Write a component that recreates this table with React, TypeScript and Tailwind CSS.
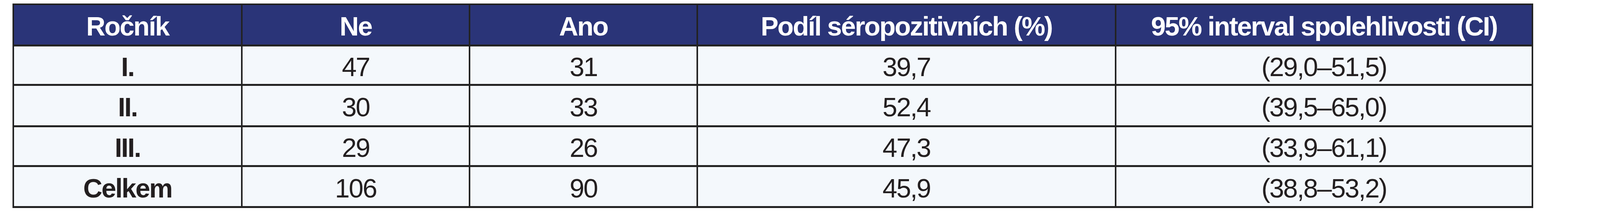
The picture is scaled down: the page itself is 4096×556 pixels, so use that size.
import React from "react";

const headers = [
  "Ročník",
  "Ne",
  "Ano",
  "Podíl séropozitivních (%)",
  "95% interval spolehlivosti (CI)",
];

const rows = [
  ["I.", "47", "31", "39,7", "(29,0–51,5)"],
  ["II.", "30", "33", "52,4", "(39,5–65,0)"],
  ["III.", "29", "26", "47,3", "(33,9–61,1)"],
  ["Celkem", "106", "90", "45,9", "(38,8–53,2)"],
];

function App() {
  return (
    <div className="w-[4096px] h-[556px] bg-white overflow-hidden pt-[9px] pl-[32px] font-['Liberation_Sans',sans-serif]">
      <div className="inline-grid grid-cols-[581px_579px_579px_1067px_1063px] grid-rows-[101px_96px_101px_97px_100px] gap-x-[4px] gap-y-[5px] bg-[#222222] pt-[4px] pb-[5px] px-[4px]">
        {headers.map((h, i) => (
          <div
            key={i}
            className="flex items-center justify-center pt-[7px] bg-[#2a3478] text-white font-bold text-[68px] leading-none tracking-[-2.5px] whitespace-nowrap"
          >
            {h}
          </div>
        ))}
        {rows.map((row, r) =>
          row.map((cell, c) => (
            <div
              key={r + "-" + c}
              className={`flex items-center justify-center pt-[7px] bg-[#f4f8fc] text-[#231f20] text-[68px] leading-none tracking-[-2.5px] whitespace-nowrap ${
                c === 0 ? "font-bold" : "font-normal"
              }`}
            >
              {cell}
            </div>
          ))
        )}
      </div>
    </div>
  );
}

export default App;
